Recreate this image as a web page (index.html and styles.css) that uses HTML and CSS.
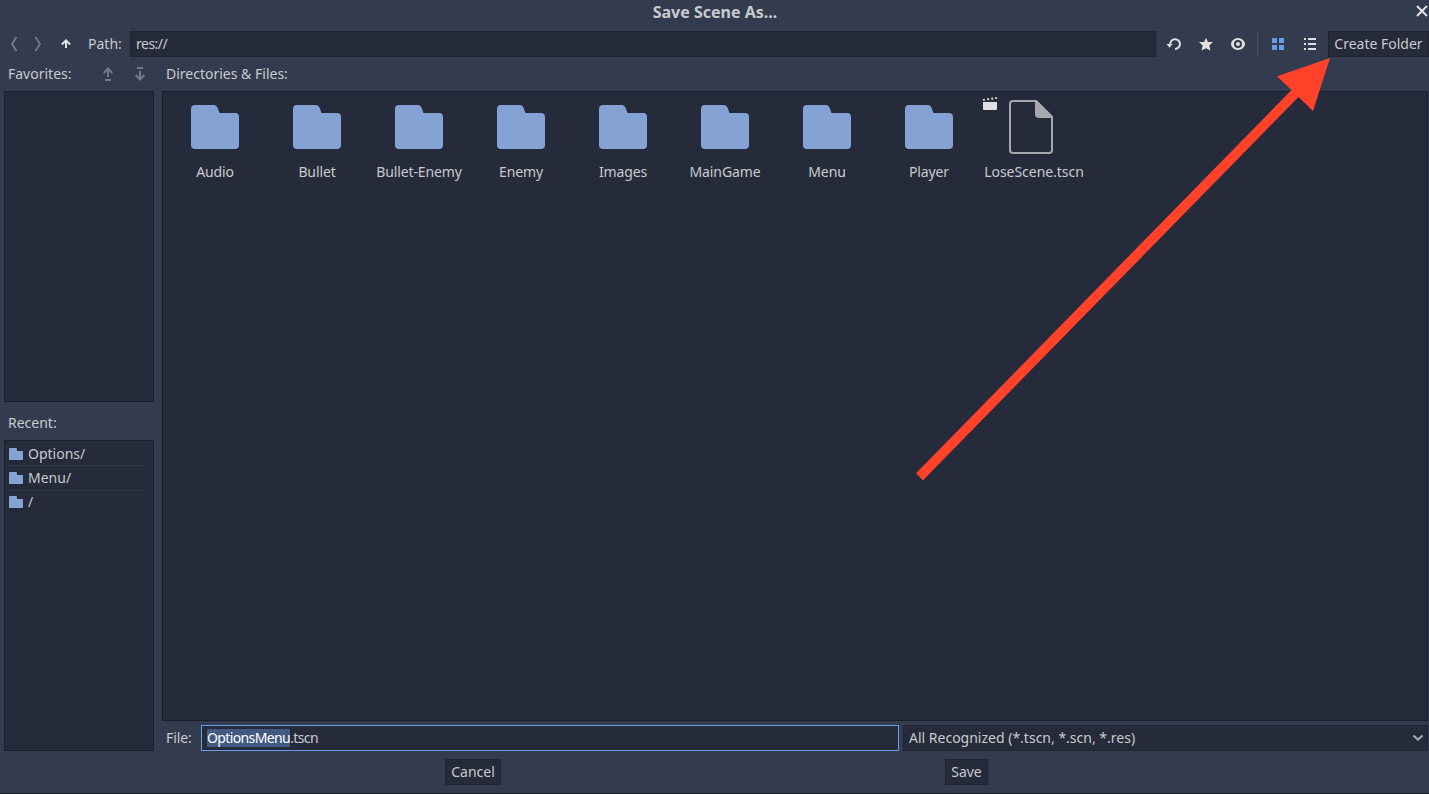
FILE: index.html
```html
<!DOCTYPE html>
<html lang="en">
<head>
<meta charset="utf-8">
<title>Save Scene As...</title>
<link rel="stylesheet" href="styles.css">
</head>
<body>
<svg class="defs" width="0" height="0">
  <symbol id="folder-big" viewBox="0 0 48 44"><path d="M4 0H23Q25.500 0 26.500 2.500L28.500 8H44Q48 8 48 12V40Q48 44 44 44H4Q0 44 0 40V4Q0 0 4 0Z" fill="#84a2d4"/></symbol>
  <symbol id="folder" viewBox="0 0 14 12"><path d="M1 0H7Q8 0 8 1V3H13Q14 3 14 4V11Q14 12 13 12H1Q0 12 0 11V1Q0 0 1 0Z" fill="#84a2d4"/></symbol>
</svg>
<div class="dialog">
  <header class="titlebar">Save Scene As...
    <svg class="close" width="12" height="12" viewBox="0 0 12 12"><path d="M1 1L11 11M11 1L1 11" stroke="#e6e7e9" stroke-width="1.800" fill="none"/></svg>
  </header>
  <div class="toolbar">
    <svg class="nav" width="78" height="26" viewBox="0 0 78 26" fill="none">
      <path d="M12.500 6L8 13L12.500 20M31.500 6L36 13L31.500 20" stroke="#767c88" stroke-width="1.700"/>
      <path d="M62 17V10.500M57.800 13.500L62 9.500L66.200 13.500" stroke="#e0e0e0" stroke-width="2"/>
    </svg>
    <span class="path-label">Path:</span>
    <div class="field path-field"><span>res://</span></div>
    <div class="tools">
      <svg width="16" height="16" viewBox="0 0 16 16"><path d="M4.200 8.500A4.900 4.900 0 1 1 9 13" fill="none" stroke="#e0e0e0" stroke-width="2"/><path d="M.5 8H6.500L3.500 11.800Z" fill="#e0e0e0"/></svg>
      <svg width="16" height="16" viewBox="0 0 16 16"><path d="M8 1.700L9.900 6H15L11.300 9.500L12.500 14.500L8 12.200L3.500 14.500L4.700 9.500L1 6H6.100Z" fill="#e0e0e0"/></svg>
      <svg width="16" height="16" viewBox="0 0 16 16"><path d="M8 2C4.500 2 1 5 1 8S4.500 14 8 14S15 11 15 8S11.500 2 8 2ZM8 4A4 4 0 1 1 8 12A4 4 0 1 1 8 4Z" fill="#e0e0e0" fill-rule="evenodd"/><circle cx="8" cy="8" r="2" fill="#e0e0e0"/></svg>
    </div>
    <i class="divider"></i>
    <div class="views">
      <svg width="16" height="16" viewBox="0 0 16 16"><path d="M2 2H7V7H2ZM9 2H14V7H9ZM2 9H7V14H2ZM9 9H14V14H9Z" fill="#699ce8"/></svg>
      <svg width="16" height="16" viewBox="0 0 16 16"><path d="M2 2H4V4H2ZM6 2H14V4H6ZM2 7H4V9H2ZM6 7H14V9H6ZM2 12H4V14H2ZM6 12H14V14H6Z" fill="#e0e0e0"/></svg>
    </div>
    <button class="btn create"><span>Create Folder</span></button>
  </div>
  <main class="body">
    <aside class="side">
      <div class="heading fav"><span>Favorites:</span>
        <svg width="48" height="16" viewBox="0 0 48 16" fill="none" stroke="#747a86" stroke-width="2"><path d="M8 11V3M3.700 7L8 2.500L12.300 7M5 14H11"/><path d="M40 5V13M35.700 9L40 13.500L44.300 9M37 2H43"/></svg>
      </div>
      <div class="pane"></div>
      <div class="heading recent-head"><span>Recent:</span></div>
      <div class="pane recent">
        <div class="row"><svg width="14" height="12"><use href="#folder"/></svg><span>Options/</span></div>
        <div class="row"><svg width="14" height="12"><use href="#folder"/></svg><span>Menu/</span></div>
        <div class="row"><svg width="14" height="12"><use href="#folder"/></svg><span>/</span></div>
      </div>
    </aside>
    <section class="content">
      <div class="heading"><span>Directories &amp; Files:</span></div>
      <div class="pane files">
        <div class="item"><svg width="48" height="44"><use href="#folder-big"/></svg><span>Audio</span></div>
        <div class="item"><svg width="48" height="44"><use href="#folder-big"/></svg><span>Bullet</span></div>
        <div class="item"><svg width="48" height="44"><use href="#folder-big"/></svg><span>Bullet-Enemy</span></div>
        <div class="item"><svg width="48" height="44"><use href="#folder-big"/></svg><span>Enemy</span></div>
        <div class="item"><svg width="48" height="44"><use href="#folder-big"/></svg><span>Images</span></div>
        <div class="item"><svg width="48" height="44"><use href="#folder-big"/></svg><span>MainGame</span></div>
        <div class="item"><svg width="48" height="44"><use href="#folder-big"/></svg><span>Menu</span></div>
        <div class="item"><svg width="48" height="44"><use href="#folder-big"/></svg><span>Player</span></div>
        <div class="item scene">
          <svg class="badge" width="16" height="14" viewBox="0 0 16 14" fill="#e0e0e0"><path d="M1 6H15V13Q15 14 14 14H2Q1 14 1 13ZM.8 3L2.600 2.700L3.200 4.600L1.400 4.900ZM5 2.400L6.800 2.100L7.400 4L5.600 4.300ZM9 1.800L10.800 1.500L11.400 3.400L9.600 3.700ZM12.800 1.200L14.600 .9L15.200 2.800L13.400 3.100Z"/></svg>
          <svg width="44" height="54" viewBox="0 0 44 54"><path d="M4 1H27L43 17V50Q43 53 40 53H4Q1 53 1 50V4Q1 1 4 1Z" fill="none" stroke="#a6a8ae" stroke-width="2"/><path d="M26 0H27.500L44 16.500V18H30Q26 18 26 14Z" fill="#a6a8ae"/></svg>
          <span>LoseScene.tscn</span>
        </div>
      </div>
      <div class="file-row">
        <span class="file-label">File:</span>
        <div class="field name"><mark>OptionsMenu</mark><span>.tscn</span></div>
        <div class="field filter"><span>All Recognized (*.tscn, *.scn, *.res)</span>
          <svg width="12" height="8" viewBox="0 0 12 8"><path d="M1.500 1.500L6 5.700L10.500 1.500" fill="none" stroke="#a9adb5" stroke-width="2"/></svg>
        </div>
      </div>
    </section>
  </main>
  <footer class="actions">
    <button class="btn cancel"><span>Cancel</span></button>
    <button class="btn save"><span>Save</span></button>
  </footer>
  <svg class="pointer" width="1429" height="794" viewBox="0 0 1429 794"><path d="M1330 58L1313 111L1298.500 97L923 480.300L916 473.300L1291.500 90L1277 76.300Z" fill="#ff4229"/></svg>
</div>
</body>
</html>
```

FILE: styles.css
```css
* { box-sizing: border-box; }
body {
  margin: 0;
  background: #333b4f;
  color: #c8cace;
  font: 14px/20px "Noto Sans", sans-serif;
}
.defs { position: absolute; }
svg { display: block; flex: none; }
span, mark { white-space: pre; }
.dialog {
  position: relative;
  width: 1429px;
  height: 794px;
  overflow: hidden;
  display: flex;
  flex-direction: column;
  border-bottom: 1px solid #171b24;
}
.titlebar {
  height: 31px;
  padding: 2px 0 0 1px;
  text-align: center;
  font-size: 16px;
  font-weight: 700;
}
.close { position: absolute; left: 1416px; top: 5px; }
.toolbar { display: flex; height: 26px; padding-left: 4px; }
.nav { margin-right: 6px; }
.path-label { width: 42px; padding-top: 3px; }
.field {
  display: flex;
  align-items: center;
  height: 26px;
  padding-left: 5px;
  background: #262b3b;
  border: 1px solid #202431;
}
.path-field { flex: none; width: 1026px; letter-spacing: -.5px; }
.tools { display: flex; flex: none; align-items: center; gap: 16px; margin-left: 10px; width: 91px; }
.divider { flex: none; width: 1px; background: #50576a; }
.views { display: flex; flex: none; align-items: center; gap: 16px; margin-left: 12px; width: 58px; }
.btn {
  height: 26px;
  padding: 0;
  border: 1px solid #202431;
  background: #262b3b;
  color: inherit;
  font: inherit;
}
.create { flex: none; width: 101px; }
.body { display: flex; gap: 8px; height: 694px; padding-left: 4px; }
.side { display: flex; flex: none; flex-direction: column; width: 150px; }
.content { display: flex; flex: none; flex-direction: column; width: 1266px; }
.heading { display: flex; align-items: center; height: 34px; padding-left: 4px; }
.fav { justify-content: space-between; padding-right: 6px; }
.recent-head { height: 38px; padding-top: 4px; }
.pane { flex: 1; background: #262b3b; border: 1px solid #1b1f2a; }
.recent { padding: 1px 7px 0 3px; }
.row { display: flex; align-items: center; gap: 5px; height: 22px; padding-left: 1px; }
.row:nth-child(1) { height: 24px; border-bottom: 1px solid #30364a; }
.row:nth-child(2) { height: 25px; border-bottom: 1px solid #30364a; }
.side .pane { flex: none; height: 311px; }
.files { display: flex; align-items: flex-start; flex: none; height: 630px; }
.item { display: flex; flex-direction: column; align-items: center; gap: 13px; width: 102px; padding-top: 13px; }
.item:first-child { margin-left: 1px; }
.item > span { display: block; letter-spacing: -.12px; }
.scene { position: relative; width: 106px; padding: 8px 0 0; gap: 8px; margin-left: 1px; }
.scene > span { letter-spacing: -.04px; }
.scene > svg:nth-child(2) { margin-right: 7px; }
.badge { position: absolute; left: 1px; top: 4px; }
.file-row { display: flex; height: 30px; padding-top: 4px; }
.file-label { width: 39px; padding: 3px 0 0 4px; letter-spacing: -.1px; }
.name { width: 698px; border-color: #699ce8; letter-spacing: -.62px; margin-right: 4px; }
mark { height: 18px; line-height: 18px; background: #425a83; color: #fff; }
.filter { flex: 1; justify-content: space-between; padding-right: 3px; }
.actions { display: flex; height: 42px; padding: 8px 0 0 445px; }
.cancel { width: 56px; margin-right: 444px; }
.save { width: 43px; }
.pointer { position: absolute; left: 0; top: 0; pointer-events: none; }
```
